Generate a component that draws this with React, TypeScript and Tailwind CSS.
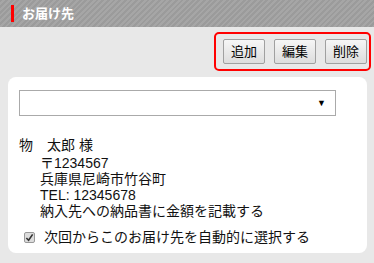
export default function App() {
  return (
    <div
      className="w-[374px] h-[263px] bg-[#e8e8e8] flex flex-col text-[14px] text-[#111]"
      style={{ fontFamily: '"Liberation Sans", "Noto Sans CJK JP", sans-serif' }}
    >
      <div className="h-[27px] shrink-0 flex items-center pl-[11px] bg-[repeating-linear-gradient(135deg,#9b9b9b_0px,#9b9b9b_2px,#a6a6a6_2px,#a6a6a6_4px)]">
        <div className="w-[3px] h-[17px] bg-[#ff0000]" />
        <span className="ml-[8px] text-[13px] font-bold text-white">お届け先</span>
      </div>

      <div className="flex justify-end pr-[3px] pt-[5px]">
        <div className="flex gap-[9px] border-2 border-[#ff0000] rounded-[5px] pl-[7px] pr-[2px] pt-[5px] pb-[5px]">
          <ActionButton label="追加" />
          <ActionButton label="編集" />
          <ActionButton label="削除" />
        </div>
      </div>

      <div className="mt-[6px] ml-[8px] mr-[7px] h-[176px] bg-white rounded-[8px] pl-[11px] pt-[13px]">
        <div className="w-[317px] h-[26px] border border-[#aaa] flex items-center justify-end pr-[9px]">
          <span className="text-[9px] leading-none text-black">▼</span>
        </div>

        <div className="mt-[21px] leading-[16px]">
          <div>物　太郎 様</div>
          <div className="pl-[21px] mt-[2px]">
            <div>〒1234567</div>
            <div>兵庫県尼崎市竹谷町</div>
            <div>TEL: 12345678</div>
            <div>納入先への納品書に金額を記載する</div>
          </div>
          <label className="mt-[10px] pl-[5px] flex items-center gap-[9px]">
            <span className="w-[11px] h-[11px] border border-[#999] rounded-[2px] bg-[#dcdcdc] flex items-center justify-center">
              <svg width="9" height="9" viewBox="0 0 10 10" fill="none">
                <path d="M1.5 5.5 L4 8 L8.5 1.5" stroke="#333" strokeWidth="1.8" />
              </svg>
            </span>
            <span>次回からこのお届け先を自動的に選択する</span>
          </label>
        </div>
      </div>
    </div>
  )
}

function ActionButton({ label }: { label: string }) {
  return (
    <button
      type="button"
      className="w-[42px] h-[25px] rounded-[2px] border border-[#a0a0a0] bg-[linear-gradient(#f6f6f6,#dddddd)] text-[13px] text-black flex items-center justify-center"
    >
      {label}
    </button>
  )
}
